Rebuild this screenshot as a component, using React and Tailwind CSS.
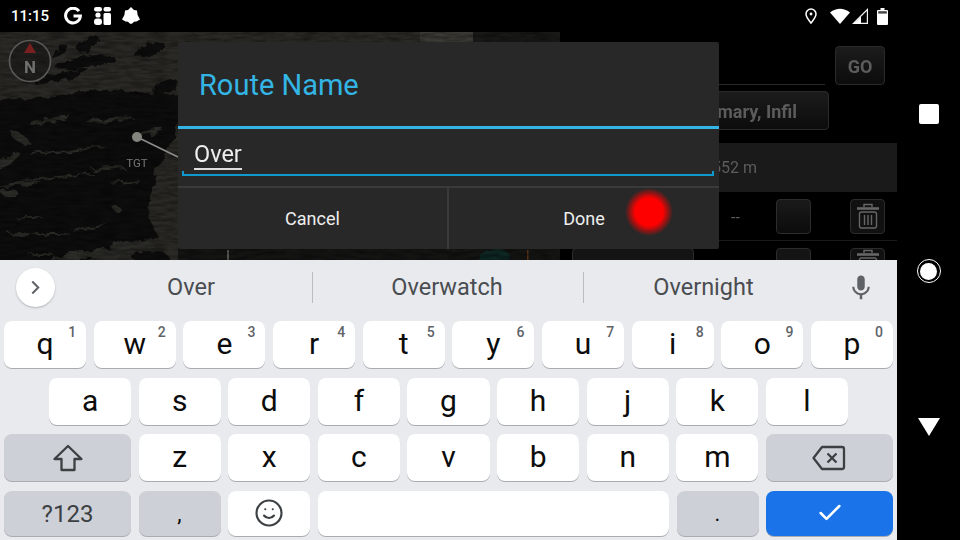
import { Check, Smile } from "lucide-react"
import { MdMic } from "react-icons/md"

const row1 = [["q", "1"], ["w", "2"], ["e", "3"], ["r", "4"], ["t", "5"], ["y", "6"], ["u", "7"], ["i", "8"], ["o", "9"], ["p", "0"]]
const row2 = ["a", "s", "d", "f", "g", "h", "j", "k", "l"]
const row3 = ["z", "x", "c", "v", "b", "n", "m"]

// light streaks on the dark part of the map
const streaks = [
    [50, 88, 22, 2.5, -8], [20, 106, 12, 4, 30], [110, 88, 24, 2, -4], [55, 120, 26, 1.2, -4], [85, 116, 20, 1.2, -4],
    [108, 136, 18, 2, -4], [60, 145, 40, 1.2, -6], [20, 152, 22, 2, -6], [8, 128, 14, 3.5, -30], [10, 161, 10, 4, 8],
    [30, 186, 14, 1.2, 0], [50, 202, 22, 1.2, 0], [20, 202, 12, 2, 4], [90, 196, 18, 1.2, -8], [118, 178, 6, 3, 30],
    [90, 222, 40, 4, -6], [130, 212, 22, 5, -12], [40, 222, 14, 1.2, 0], [125, 150, 16, 1.2, -4], [150, 100, 14, 2, -10],
]
const darkBlobs = [
    [85, 30, 30, 6, -8], [88, 12, 12, 8, -40], [62, 45, 28, 4, -14], [150, 18, 16, 6, -20], [165, 55, 14, 5, -20],
    [60, 20, 10, 3, -30], [135, 200, 14, 10, 20], [150, 225, 18, 6, 0],
]

const MapView = () => (
    <svg viewBox="0 0 560 228" className="block h-[228px] w-[560px] shrink-0 font-['Roboto',sans-serif]">
        <defs>
            <filter id="grain" x="0" y="0" width="100%" height="100%">
                <feTurbulence type="fractalNoise" baseFrequency="0.06 0.3" numOctaves="3" seed="4" />
                <feColorMatrix values="0 0 0 0 0  0 0 0 0 0  0 0 0 0 0  1.6 0 0 0 -0.55" />
            </filter>
            <filter id="rough" x="-5%" y="-5%" width="110%" height="110%">
                <feTurbulence type="fractalNoise" baseFrequency="0.09" numOctaves="3" seed="7" result="n" />
                <feDisplacementMap in="SourceGraphic" in2="n" scale="9" />
                <feGaussianBlur stdDeviation="0.5" />
            </filter>
        </defs>
        <rect width="560" height="228" fill="#2a2925" />
        <rect x="420" width="53" height="12" fill="#3b3934" />
        <rect x="473" width="87" height="12" fill="#191917" />
        <rect x="178" y="216" width="382" height="12" fill="#141413" />
        <g filter="url(#rough)">
            <path d="M-10 68 L40 66 L60 62 L120 58 L190 64 L178 92 L170 115 L158 130 L152 160 L148 185 L158 205 L120 212 L70 240 L-10 240 Z" fill="#0a0a09" />
            {streaks.map(([cx, cy, rx, ry, r], i) => (
                <ellipse key={i} cx={cx} cy={cy} rx={rx} ry={ry} transform={`rotate(${r} ${cx} ${cy})`} fill="#2a2926" />
            ))}
            {darkBlobs.map(([cx, cy, rx, ry, r], i) => (
                <ellipse key={i} cx={cx} cy={cy} rx={rx} ry={ry} transform={`rotate(${r} ${cx} ${cy})`} fill="#0b0b0a" />
            ))}
            <ellipse cx="495" cy="226" rx="16" ry="9" fill="#0d2622" />
        </g>
        <rect x="527" y="218" width="1.5" height="10" fill="#5a3216" />
        <rect x="227" y="218" width="2" height="10" fill="#55534e" />
        <rect width="560" height="228" filter="url(#grain)" opacity="0.5" />
        <line x1="137" y1="105" x2="178" y2="125" stroke="#8c8c8a" strokeWidth="1.6" />
        <circle cx="137" cy="105" r="5" fill="#85857f" />
        <rect x="125" y="125" width="24" height="13" fill="#0a0a0a" opacity="0.6" />
        <text x="137" y="135" textAnchor="middle" fontSize="11.5" fill="#777">TGT</text>
        <circle cx="30" cy="29" r="20.5" fill="#111" fillOpacity="0.45" stroke="#5a5a58" strokeWidth="1.6" />
        <path d="M30 11 L36 21 L24 21 Z" fill="#7a1f1f" />
        <text x="30" y="41" textAnchor="middle" fontSize="17" fontWeight="700" fill="#6f6f6d">N</text>
    </svg>
)

const Trash = ({ className }) => (
    <svg viewBox="0 0 24 26" className={className} fill="none" stroke="#666" strokeWidth="1.4">
        <path d="M1 5.500h22" strokeWidth="2.6" />
        <path d="M8 4V1.500h8V4" />
        <rect x="3.500" y="9" width="17" height="16" rx="2" />
        <path d="M8.500 12v10M12 12v10M15.500 12v10" />
    </svg>
)

const SidePanel = () => (
    <div className="flex h-[228px] min-w-0 flex-1 flex-col overflow-hidden bg-black font-['Roboto',sans-serif] text-[#5c5c5c]">
        <div className="flex shrink-0 items-end px-[12px] pt-[14px]">
            <div className="mr-[10px] h-[38px] flex-1 border-b border-[#2a2a2a]"></div>
            <div className="flex h-[39px] w-[50px] items-center justify-center rounded-[4px] border border-[#2a2a2a] bg-gradient-to-b from-[#1c1c1c] to-[#0c0c0c] pt-[1px] text-[18px] font-bold">GO</div>
        </div>
        <div className="ml-[12px] mt-[6px] flex h-[39px] w-[257px] shrink-0 items-center justify-end rounded-[4px] border border-[#2a2a2a] bg-gradient-to-b from-[#1c1c1c] to-[#0c0c0c] pr-[31px] pt-[1px] text-[18px] font-bold">
            Primary, Infil
        </div>
        <div className="mt-[13px] flex h-[49px] shrink-0 items-center justify-end bg-[#1a1a1a] pr-[140px] text-[16px]">552 m</div>
        <div className="flex h-[49px] shrink-0 items-center border-b border-[#1a1a1a] pr-[12px]">
            <span className="ml-[171px] w-[45px] pt-[3px] text-[16px]">--</span>
            <div className="h-[35px] w-[35px] rounded-[4px] border border-[#2c2c2c] bg-gradient-to-b from-[#1a1a1a] to-[#0c0c0c]"></div>
            <div className="ml-auto flex h-[35px] w-[35px] items-center justify-center rounded-[4px] border border-[#2c2c2c] bg-[#111]">
                <Trash className="h-[26px] w-[24px]" />
            </div>
        </div>
        <div className="mt-[7px] flex shrink-0 items-start pr-[12px]">
            <div className="ml-[12px] h-[35px] w-[122px] rounded-[4px] border border-[#2c2c2c] bg-[#141414]"></div>
            <div className="ml-[82px] h-[35px] w-[35px] rounded-[4px] border border-[#2c2c2c] bg-[#141414]"></div>
            <div className="ml-auto flex h-[35px] w-[35px] items-start justify-center rounded-[4px] border border-[#2c2c2c] bg-[#111]">
                <Trash className="h-[26px] w-[24px]" />
            </div>
        </div>
    </div>
)

const RouteDialog = () => (
    <div className="absolute left-[178px] top-[10px] flex h-[207px] w-[541px] flex-col rounded-[2px] bg-[#282828] font-['Roboto',sans-serif]">
        <div className="flex h-[84px] shrink-0 items-center pl-[21px] pt-[4px] text-[29px] text-[#33b5e5]">Route Name</div>
        <div className="h-[2.5px] shrink-0 bg-[#33b5e5]"></div>
        <div className="relative h-[57px] shrink-0 pl-[16px] pt-[11px]">
            <span className="border-b-2 border-[#ddd] text-[23.5px] leading-[28px] text-[#eee]">Over</span>
            <div className="absolute bottom-[10px] left-[4px] right-[5px] h-[5px] border-x-2 border-b-2 border-[#0f99cc]"></div>
        </div>
        <div className="h-[2px] shrink-0 bg-[#3a3a3a]"></div>
        <div className="flex flex-1 text-[18px] text-[#eeeeee]">
            <div className="flex w-[269px] items-center justify-center">Cancel</div>
            <div className="w-[2px] bg-[#3a3a3a]"></div>
            <div className="flex flex-1 items-center justify-center">Done</div>
        </div>
    </div>
)

const StatusBar = () => (
    <div className="flex h-8 shrink-0 items-center bg-black pl-[11px] pr-[9px] font-['Roboto',sans-serif] text-white">
        <span className="text-[15px] font-medium">11:15</span>
        <svg viewBox="0 0 18 18" className="ml-[15px] h-[18px] w-[18px]" fill="none" stroke="white" strokeWidth="3">
            <path d="M15 4.200A7.400 7.400 0 1 0 16.400 9H9.500" />
        </svg>
        <svg viewBox="0 0 17 18" className="ml-[12px] h-[18px] w-[17px]" fill="white">
            <rect x="0" y="0" width="8" height="4.500" rx="2.200" />
            <rect x="9.500" y="0" width="7.500" height="4.500" rx="2" />
            <circle cx="4" cy="8" r="2.600" />
            <rect x="0" y="11.500" width="8" height="6.500" rx="3" />
            <rect x="9.500" y="6" width="7.500" height="12" rx="1.500" />
        </svg>
        <svg viewBox="0 0 18 18" className="ml-[11px] h-[18px] w-[18px]" fill="white">
            <path d="M9 0 L12 3 L15 3.500 L15.600 8 L18 12.500 L14.500 14.500 L12 14.800 Q9 19 6 14.800 L3.500 14.500 L0 12.500 L2.400 8 L3 3.500 L6 3 Z" />
        </svg>
        <svg viewBox="0 0 12 16" className="ml-auto h-[16px] w-[12px]" fill="none" stroke="white" strokeWidth="1.5">
            <path d="M6 15C3.500 11.500 1 9 1 6a5 5 0 0 1 10 0c0 3-2.500 5.500-5 9Z" />
            <circle cx="6" cy="6" r="1.400" fill="white" stroke="none" />
        </svg>
        <svg viewBox="0 0 20 16" className="ml-[13px] h-[16px] w-[20px]" fill="white">
            <path d="M0 4.500 Q10 -3 20 4.500 L10 16 Z" />
        </svg>
        <svg viewBox="0 0 16 16" className="ml-[2px] h-[16px] w-[16px]" fill="white">
            <path d="M16 0V16H0Z M14.800 3V14.800H3Z" fillRule="evenodd" opacity="0.95" />
            <path d="M9 8.500V16H1.500Z" />
        </svg>
        <svg viewBox="0 0 11 17" className="ml-[9px] h-[17px] w-[11px]" fill="white">
            <path d="M3.500 0h4v2H10a1 1 0 0 1 1 1v13a1 1 0 0 1-1 1H1a1 1 0 0 1-1-1V3a1 1 0 0 1 1-1h2.500Z" />
            <rect x="1.200" y="3.200" width="8.600" height="2.400" fill="#444" />
        </svg>
    </div>
)

const Key = ({ children, hint, className = "" }) => (
    <div className={`relative flex h-full items-center justify-center rounded-[8px] shadow-[0_1px_0_#a8abb1] ${className}`}>
        {children}
        {hint && <span className="absolute right-[10px] top-[1px] text-[14px] font-medium text-[#5f6368]">{hint}</span>}
    </div>
)

const Keyboard = () => (
    <div className="flex h-[280px] shrink-0 flex-col bg-[#e8eaed] font-['Roboto',sans-serif] text-[30px] text-[#0c0c0c]">
        <div className="flex h-[61px] shrink-0 items-center pb-[6px] text-[23.5px] text-[#4a4d51]">
            <div className="ml-[16px] flex h-[39px] w-[39px] items-center justify-center rounded-full bg-white shadow-[0_1px_2px_#b0b3b8]">
                <svg viewBox="0 0 12 16" className="h-[15px] w-[11px]" fill="none" stroke="#5f6368" strokeWidth="2.2"><path d="M2.500 1.500 9 8l-6.500 6.500" /></svg>
            </div>
            <div className="flex w-[257px] justify-center pl-[15px]">Over</div>
            <div className="h-[31px] w-px bg-[#b8bbc0]"></div>
            <div className="flex w-[268px] justify-center">Overwatch</div>
            <div className="ml-[2px] h-[31px] w-px bg-[#b8bbc0]"></div>
            <div className="flex w-[239px] justify-center">Overnight</div>
            <MdMic className="ml-[23px] h-[30px] w-[30px] text-[#5f6368]" />
        </div>
        <div className="flex h-[47px] shrink-0 gap-[7.5px] px-1">
            {row1.map(([k, n]) => <Key key={k} hint={n} className="flex-1 bg-white pb-[3px]">{k}</Key>)}
        </div>
        <div className="mt-[9.5px] flex h-[47px] shrink-0 gap-[7.5px] px-[49px]">
            {row2.map((k) => <Key key={k} className="flex-1 bg-white pb-[2px]">{k}</Key>)}
        </div>
        <div className="mt-[9.5px] flex h-[47px] shrink-0 gap-[7.5px] px-1">
            <Key className="w-[127px] shrink-0 bg-[#cdd0d6]">
                <svg viewBox="0 0 30 28" className="h-[28px] w-[30px]" fill="none" stroke="#3c4043" strokeWidth="2.3" strokeLinejoin="round"><path d="M15 2 1.500 15H8.500V26H21.500V15H28.500Z" /></svg>
            </Key>
            {row3.map((k) => <Key key={k} className="flex-1 bg-white pb-[3px]">{k}</Key>)}
            <Key className="w-[127px] shrink-0 bg-[#cdd0d6]">
                <svg viewBox="0 0 34 26" className="h-[26px] w-[34px]" fill="none" stroke="#3c4043" strokeWidth="2.3" strokeLinejoin="round"><path d="M10 2H30a2 2 0 0 1 2 2V22a2 2 0 0 1-2 2H10L1.500 13Z" /><path d="m15.500 8.500 9 9m0-9-9 9" /></svg>
            </Key>
        </div>
        <div className="mt-[9.5px] flex h-[45px] shrink-0 gap-[7.5px] px-1">
            <Key className="w-[127px] shrink-0 bg-[#cdd0d6] pt-[2px] text-[24px] text-[#3c4043]">?123</Key>
            <Key className="w-[82px] shrink-0 bg-[#cdd0d6] text-[22px]">,</Key>
            <Key className="w-[82px] shrink-0 bg-white"><Smile className="h-[30px] w-[30px] text-[#3c4043]" strokeWidth={1.7} /></Key>
            <Key className="flex-1 bg-white"></Key>
            <Key className="w-[82px] shrink-0 bg-[#cdd0d6] text-[22px]">.</Key>
            <Key className="w-[127px] shrink-0 bg-[#1a73e8]"><Check className="h-[28px] w-[28px] text-white" strokeWidth={2.2} /></Key>
        </div>
    </div>
)

const NavBar = () => (
    <div className="flex w-[63px] shrink-0 flex-col items-center justify-between bg-black py-[104px]">
        <div className="h-5 w-5 rounded-[2px] bg-white"></div>
        <div className="flex h-6 w-6 items-center justify-center rounded-full border-[1.5px] border-white">
            <div className="h-[17px] w-[17px] rounded-full bg-white"></div>
        </div>
        <svg viewBox="0 0 22 18" className="h-[18px] w-[22px]" fill="white"><path d="M0 0H22L11 18Z" /></svg>
    </div>
)

const App = () => {
    return (
        <div className="flex h-[540px] w-[960px] overflow-hidden bg-black">
            <div className="flex w-[897px] shrink-0 flex-col">
                <StatusBar />
                <div className="relative flex h-[228px] shrink-0">
                    <MapView />
                    <SidePanel />
                    <RouteDialog />
                    <div className="absolute left-[625px] top-[156px] h-[48px] w-[48px] rounded-full bg-[radial-gradient(circle_closest-side,#ff0000_58%,rgba(255,0,0,0)_100%)]"></div>
                </div>
                <Keyboard />
            </div>
            <NavBar />
        </div>
    )
}
export default App
